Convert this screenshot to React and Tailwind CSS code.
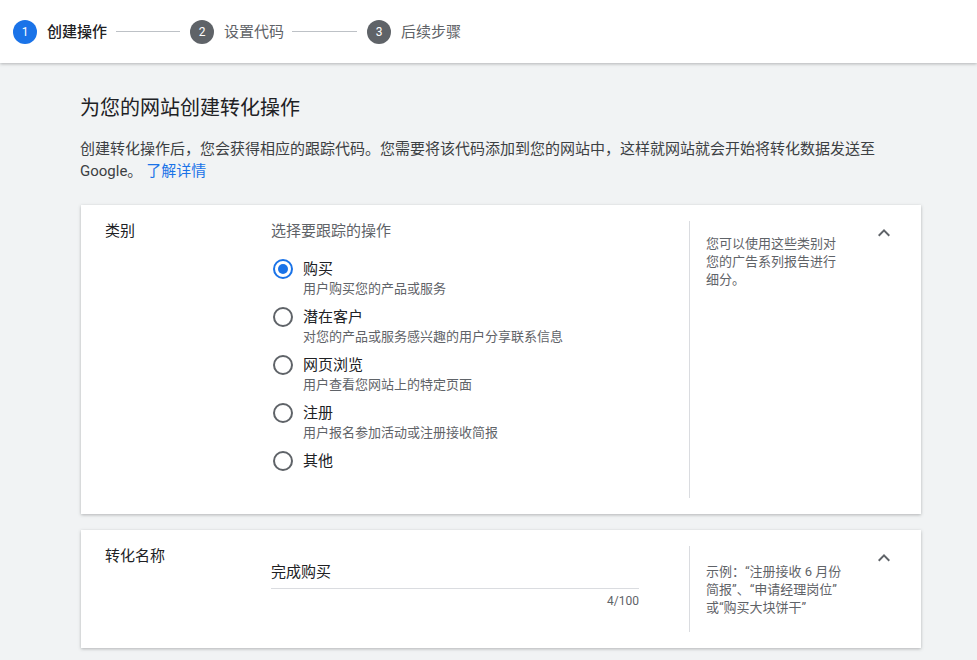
import React, { useState } from 'react';

const options = [
  { id: 'purchase', label: '购买', desc: '用户购买您的产品或服务' },
  { id: 'lead', label: '潜在客户', desc: '对您的产品或服务感兴趣的用户分享联系信息' },
  { id: 'pageview', label: '网页浏览', desc: '用户查看您网站上的特定页面' },
  { id: 'signup', label: '注册', desc: '用户报名参加活动或注册接收简报' },
  { id: 'other', label: '其他', desc: '' },
];

const ChevronUp = () => (
  <svg className="w-6 h-6 text-[#5f6368]" viewBox="0 0 24 24" fill="currentColor">
    <path d="M12 8l-6 6 1.41 1.41L12 10.83l4.59 4.58L18 14z" />
  </svg>
);

const Step = ({ n, label, active }) => (
  <div className="flex items-center">
    <div
      className={`w-6 h-6 rounded-full flex items-center justify-center text-[12px] text-white ${
        active ? 'bg-[#1a73e8]' : 'bg-[#5f6368]'
      }`}
    >
      {n}
    </div>
    <span className={`ml-[10px] text-[15px] leading-[22px] mt-px ${active ? 'font-medium text-[#202124]' : 'text-[#5f6368]'}`}>
      {label}
    </span>
  </div>
);

const Radio = ({ checked, onClick, label, desc }) => (
  <div className="flex items-start cursor-pointer" onClick={onClick}>
    <div
      className={`ml-[2px] w-5 h-5 rounded-full border-2 flex items-center justify-center shrink-0 ${
        checked ? 'border-[#1a73e8]' : 'border-[#5f6368]'
      }`}
    >
      {checked && <div className="w-[10px] h-[10px] rounded-full bg-[#1a73e8]" />}
    </div>
    <div className="ml-[10px]">
      <div className="text-[15px] leading-[20px] text-[#202124]">{label}</div>
      {desc && <div className="text-[13px] leading-[20px] text-[#5f6368]">{desc}</div>}
    </div>
  </div>
);

export default function App() {
  const [selected, setSelected] = useState('purchase');
  const [name, setName] = useState('完成购买');

  return (
    <div className="min-h-screen bg-[#f1f3f4] font-[Roboto,'Noto_Sans_CJK_SC',sans-serif]">
      <div className="h-[63px] bg-white flex items-center pl-[13px] shadow-[0_1px_3px_rgba(60,64,67,0.35)] relative">
        <Step n="1" label="创建操作" active />
        <div className="ml-[9px] mr-[10px] w-[64px] h-px bg-[#bdc1c6]" />
        <Step n="2" label="设置代码" />
        <div className="ml-[8px] mr-[10px] w-[65px] h-px bg-[#bdc1c6]" />
        <Step n="3" label="后续步骤" />
      </div>

      <div className="pl-[80px] pt-[31px] pb-6">
        <h1 className="text-[20px] leading-[28px] text-[#202124]">为您的网站创建转化操作</h1>
        <p className="mt-4 w-[820px] text-[15px] leading-[22px] text-[#3c4043]">
          创建转化操作后，您会获得相应的跟踪代码。您需要将该代码添加到您的网站中，这样就网站就会开始将转化数据发送至 Google。<a href="#" className="ml-[4px] text-[#1a73e8]">了解详情</a>
        </p>

        <div className="mt-[23px] ml-px w-[840px] flex flex-col gap-4">
          <div className="bg-white shadow-[0_1px_3px_rgba(60,64,67,0.35)] flex py-4 pl-6 pr-[25px]">
            <div className="w-[166px] text-[15px] leading-[20px] text-[#202124]">类别</div>
            <div className="w-[368px] pb-[27px]">
              <div className="text-[15px] leading-[20px] text-[#5f6368]">选择要跟踪的操作</div>
              <div className="mt-[18px] flex flex-col gap-2">
                {options.map((o) => (
                  <Radio
                    key={o.id}
                    label={o.label}
                    desc={o.desc}
                    checked={selected === o.id}
                    onClick={() => setSelected(o.id)}
                  />
                ))}
              </div>
            </div>
            <div className="ml-[50px] border-l border-[#dadce0] pl-4 pt-[14px] w-[160px]">
              <p className="w-[140px] text-[13px] leading-[18px] text-[#5f6368]">
                您可以使用这些类别对您的广告系列报告进行细分。
              </p>
            </div>
            <div className="ml-auto">
              <ChevronUp />
            </div>
          </div>

          <div className="bg-white shadow-[0_1px_3px_rgba(60,64,67,0.35)] flex py-4 pl-6 pr-[25px]">
            <div className="w-[166px] text-[15px] leading-[20px] text-[#202124]">转化名称</div>
            <div className="w-[368px] pt-[14px]">
              <input
                value={name}
                onChange={(e) => setName(e.target.value)}
                className="w-full pb-[6px] text-[15px] leading-[20px] text-[#202124] border-b border-[#dadce0] outline-none bg-transparent"
              />
              <div className="mt-[4px] text-right text-[12px] leading-4 text-[#5f6368]">{name.length}/100</div>
            </div>
            <div className="ml-[50px] border-l border-[#dadce0] pl-4 pt-[17px] pb-[15px] w-[160px]">
              <p className="whitespace-nowrap text-[13px] leading-[18px] text-[#5f6368]">
                示例：“注册接收 6 月份<br />
                简报”、“申请经理岗位”<br />
                或“购买大块饼干”
              </p>
            </div>
            <div className="ml-auto">
              <ChevronUp />
            </div>
          </div>
        </div>
      </div>
    </div>
  );
}
